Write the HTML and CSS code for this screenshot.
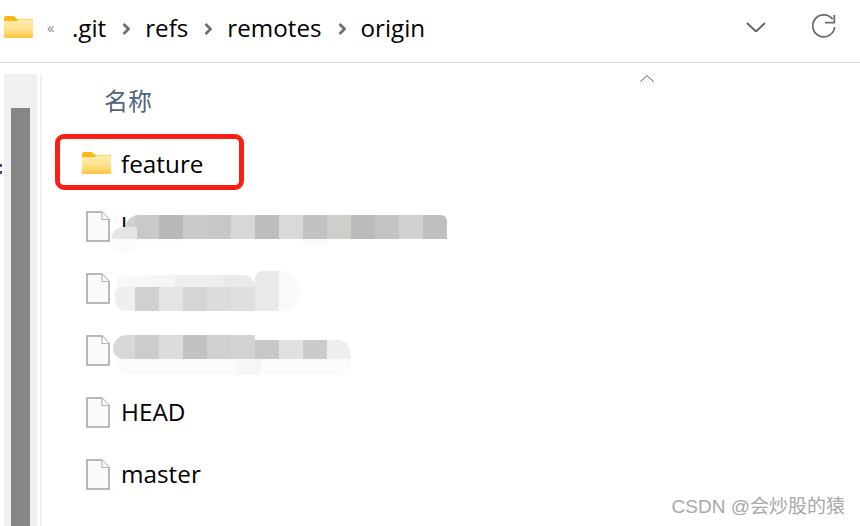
FILE: index.html
```html
<!DOCTYPE html>
<html lang="zh-CN">

<head>
    <meta charset="UTF-8">
    <meta name="viewport" content="width=device-width, initial-scale=1.0">
    <title>origin</title>
    <link rel="stylesheet" href="styles.css">
</head>

<body>
    <svg class="defs" width="0" height="0">
        <defs>
            <linearGradient id="folderFill" x1="0" y1="0" x2="0" y2="1">
                <stop offset="0" stop-color="#ffeeb0" />
                <stop offset="0.55" stop-color="#ffe08a" />
                <stop offset="1" stop-color="#fcc63f" />
            </linearGradient>
            <symbol id="folder" viewBox="0 0 29 22">
                <path d="M0 2 Q0 0 2 0 H9 Q10 0 11 1 L13 3 H29 V6 H0 Z" fill="#fcb717" />
                <path d="M0 5 H13 L14.500 3.500 H28 Q29 3.500 29 4.500 V21 Q29 22 28 22 H1 Q0 22 0 21 Z" fill="url(#folderFill)" />
            </symbol>
            <symbol id="file" viewBox="0 0 24 31">
                <path d="M1 1 H16 L23 8.500 V30 H1 Z" fill="#fafafa" stroke="#a3a3a3" stroke-width="1.500" />
                <path d="M16 1 V8.500 H23" fill="#fff" stroke="#b5b5b5" stroke-width="1.200" />
            </symbol>
        </defs>
    </svg>

    <!-- address bar -->
    <header class="topbar">
        <svg class="icon-folder-top"><use href="#folder" /></svg>
        <span class="more">«</span>
        <nav class="crumbs">
            <span>.git</span>
            <svg class="sep" viewBox="0 0 8 12"><path d="M1.500 1 L6.500 6 L1.500 11" /></svg>
            <span>refs</span>
            <svg class="sep" viewBox="0 0 8 12"><path d="M1.500 1 L6.500 6 L1.500 11" /></svg>
            <span>remotes</span>
            <svg class="sep" viewBox="0 0 8 12"><path d="M1.500 1 L6.500 6 L1.500 11" /></svg>
            <span>origin</span>
        </nav>
        <svg class="drop" viewBox="0 0 20 10"><path d="M1 1 L10 9.500 L19 1" /></svg>
        <svg class="refresh" viewBox="0 0 24 24">
            <path d="M20.600 5.300 A11 11 0 1 0 22.700 13" />
            <path d="M13 8.700 H22.300 V1" />
        </svg>
    </header>

    <main class="main">
        <span class="edge-mark"></span>
        <aside class="track"><div class="thumb"></div></aside>

        <section class="panel">
            <div class="list-head">
                <span class="col-name">名称</span>
                <svg class="sort" viewBox="0 0 14 7"><path d="M0.500 6.500 L7 0.700 L13.500 6.500" /></svg>
            </div>

            <ul class="files">
                <li class="row row-marked">
                    <svg class="icon-folder"><use href="#folder" /></svg>
                    <span class="name">feature</span>
                    <span class="marker"></span>
                </li>
                <li class="row">
                    <svg class="icon-file"><use href="#file" /></svg>
                    <span class="name">l</span>
                    <span class="blur blur-1a"></span>
                    <span class="blur blur-1b"></span>
                    <span class="blur blur-1c"></span>
                </li>
                <li class="row">
                    <svg class="icon-file"><use href="#file" /></svg>
                    <span class="blur blur-2b"></span>
                    <span class="blur blur-2a"></span>
                    <span class="blur blur-2c"></span>
                </li>
                <li class="row">
                    <svg class="icon-file"><use href="#file" /></svg>
                    <span class="blur blur-3a"></span>
                    <span class="blur blur-3b"></span>
                    <span class="blur blur-3c"></span>
                </li>
                <li class="row">
                    <svg class="icon-file"><use href="#file" /></svg>
                    <span class="name">HEAD</span>
                </li>
                <li class="row">
                    <svg class="icon-file"><use href="#file" /></svg>
                    <span class="name">master</span>
                </li>
            </ul>
        </section>
    </main>

    <div class="watermark">CSDN @会炒股的猿</div>
</body>

</html>
```

FILE: styles.css
```css
/* explorer window */
* {
    box-sizing: border-box;
}

body {
    margin: 0;
    width: 860px;
    height: 526px;
    overflow: hidden;
    position: relative;
    background: #fff;
    color: #000;
    font-family: "Open Sans", "Noto Sans CJK SC", sans-serif;
}

.defs {
    position: absolute;
}

/* address bar */
.topbar {
    height: 63px;
    border-bottom: 1px solid #d9d9d9;
    display: flex;
    align-items: center;
    padding-left: 4px;
}

.icon-folder-top {
    width: 29px;
    height: 22px;
    margin-top: -8px;
}

.more {
    width: 10px;
    margin-left: 14px;
    margin-top: -8px;
    font-size: 15px;
    line-height: 1;
    color: #8a8a8a;
}

.crumbs {
    display: flex;
    align-items: center;
    margin-left: 15px;
    margin-top: -7px;
    font-size: 24.200px;
}

.sep {
    width: 8px;
    height: 12px;
    margin: 2px 15px 0 16px;
    fill: none;
    stroke: #707070;
    stroke-width: 2.800;
}

.drop {
    width: 20px;
    height: 10px;
    position: absolute;
    left: 746px;
    top: 22px;
    fill: none;
    stroke: #666;
    stroke-width: 2;
}

.refresh {
    width: 24px;
    height: 24px;
    position: absolute;
    left: 812px;
    top: 14px;
    fill: none;
    stroke: #6e6e6e;
    stroke-width: 1.800;
}

/* left pane */
.main {
    display: flex;
    height: 463px;
    position: relative;
}

.edge-mark {
    position: absolute;
    left: 0;
    top: 101px;
    width: 2px;
    height: 14px;
    background: repeating-linear-gradient(#2a4f9c 0 3px, #fff 3px 7px);
}

.track {
    width: 33px;
    margin: 11px 0 0 4px;
    padding: 34px 7px 0;
    background: #f0f0f0;
}

.thumb {
    height: 100%;
    background: #868686;
}

/* file list */
.panel {
    flex: 1;
    margin: 11px 0 0 3px;
    border-left: 2px solid #f0f0f0;
    position: relative;
}

.list-head {
    height: 60px;
    padding: 14px 0 0 62px;
}

.col-name {
    display: block;
    font-family: "Noto Sans CJK SC", sans-serif;
    font-size: 24px;
    color: #4f6380;
    line-height: 1;
}

.sort {
    position: absolute;
    left: 598px;
    top: 1px;
    width: 14px;
    height: 7px;
    fill: none;
    stroke: #555;
    stroke-width: 1;
}

.files {
    list-style: none;
    margin: 0;
    padding: 0;
}

.row {
    height: 62px;
    display: flex;
    align-items: center;
    padding-left: 44px;
    position: relative;
    font-size: 24.300px;
}

.icon-file {
    width: 24px;
    height: 31px;
    margin: -2px 11px 0 0;
}

.icon-folder {
    width: 29px;
    height: 22px;
    margin: -4px 10px 0 -4px;
    flex: none;
}

.name {
    line-height: 1;
    margin-top: -1px;
}

/* red annotation round the folder */
.marker {
    position: absolute;
    left: 13px;
    top: 0;
    width: 189px;
    height: 56px;
    border: 5px solid #fb1e13;
    border-radius: 9px;
}

/* pasted mosaics covering the private file names */
.blur {
    position: absolute;
}

.blur-1a {
    left: 83px;
    top: 19px;
    width: 322px;
    height: 24px;
    border-radius: 14px 6px 0 0;
    background: linear-gradient(90deg,
        #d2d2d2 0 10px, #c9c9c9 10px 34px, #b9b8b8 34px 58px, #cbcbcb 58px 82px,
        #c6c7c9 82px 106px, #d8d7d5 106px 130px, #bdbdbd 130px 154px, #d9d9d9 154px 178px,
        #c2c2c2 178px 202px, #cfcecb 202px 226px, #babbbd 226px 250px, #c3c3c1 250px 274px,
        #d0d1d3 274px 298px, #bfbfbf 298px);
}

.blur-1b {
    left: 69px;
    top: 31px;
    width: 26px;
    height: 26px;
    border-radius: 13px 0 10px 10px;
    background: linear-gradient(#e5e5e4 0 12px, #fbfbfb 12px);
}

.blur-1c {
    left: 93px;
    top: 43px;
    width: 312px;
    height: 7px;
    background: linear-gradient(90deg, #fcfcfb 0 48px, #fff 48px 168px, #fbfbfb 168px 192px, #fff 192px);
}

.blur-2a {
    left: 73px;
    top: 29px;
    width: 140px;
    height: 24px;
    border-radius: 6px 0 0 10px;
    background: linear-gradient(90deg,
        #f0efee 0 20px, #d0d0ce 20px 44px, #e3e5e5 44px 68px, #d5d5d5 68px 92px,
        #dbdcde 92px 116px, #e0dfde 116px);
}

.blur-2b {
    left: 75px;
    top: 17px;
    width: 138px;
    height: 12px;
    border-radius: 12px 30px 0 0;
    background: linear-gradient(90deg,
        #f8f8f8 0 34px, #f5f5f4 34px 58px, #eeeeee 58px 82px, #eeeeee 82px 106px, #ebeaea 106px);
}

.blur-2c {
    left: 213px;
    top: 13px;
    width: 45px;
    height: 40px;
    border-radius: 8px 20px 20px 0;
    background: linear-gradient(90deg, #e9e9e9 0 24px, #f8f9fb 24px);
}

.blur-3a {
    left: 71px;
    top: 15px;
    width: 142px;
    height: 24px;
    border-radius: 14px 0 0 10px;
    background: linear-gradient(90deg,
        #d8d8d8 0 22px, #cccccc 22px 46px, #dcdcda 46px 70px, #c2c2c2 70px 94px,
        #cfd0d0 94px 118px, #d3d3d3 118px);
}

.blur-3b {
    left: 213px;
    top: 20px;
    width: 96px;
    height: 19px;
    border-radius: 0 14px 0 0;
    background: linear-gradient(90deg,
        #c8c7c6 0 24px, #e0e1e3 24px 48px, #cbcbcb 48px 72px, #efefef 72px);
}

.blur-3c {
    left: 75px;
    top: 39px;
    width: 234px;
    height: 16px;
    border-radius: 0 0 12px 12px;
    background: linear-gradient(90deg, #fbfbfb 0 120px, #f6f6f6 120px 144px, #fcfcfc 144px);
}

/* watermark */
.watermark {
    position: absolute;
    right: 15px;
    bottom: 8px;
    font-family: "Liberation Sans", "Noto Sans CJK SC", sans-serif;
    font-size: 19px;
    line-height: 22px;
    color: #a8a8a8;
}
```
